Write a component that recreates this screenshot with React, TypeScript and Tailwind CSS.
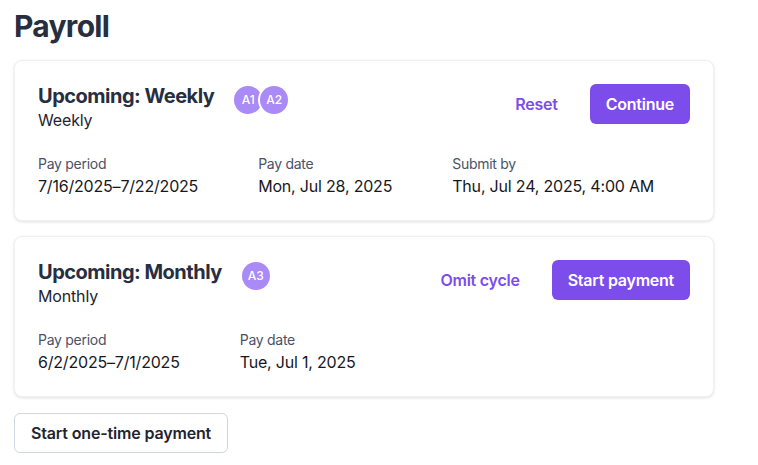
type Field = { label: string; value: string };

type Cycle = {
  title: string;
  subtitle: string;
  avatars: string[];
  secondary: string;
  primary: string;
  fields: Field[];
};

const cycles: Cycle[] = [
  {
    title: 'Upcoming: Weekly',
    subtitle: 'Weekly',
    avatars: ['A1', 'A2'],
    secondary: 'Reset',
    primary: 'Continue',
    fields: [
      { label: 'Pay period', value: '7/16/2025–7/22/2025' },
      { label: 'Pay date', value: 'Mon, Jul 28, 2025' },
      { label: 'Submit by', value: 'Thu, Jul 24, 2025, 4:00 AM' },
    ],
  },
  {
    title: 'Upcoming: Monthly',
    subtitle: 'Monthly',
    avatars: ['A3'],
    secondary: 'Omit cycle',
    primary: 'Start payment',
    fields: [
      { label: 'Pay period', value: '6/2/2025–7/1/2025' },
      { label: 'Pay date', value: 'Tue, Jul 1, 2025' },
    ],
  },
];

function AvatarStack({ ids }: { ids: string[] }) {
  return (
    <div className="flex mt-0.5 ml-5 -space-x-[2px]">
      {ids.map((id) => (
        <div
          key={id}
          className="w-7 h-7 rounded-full bg-[#a98af6] ring-2 ring-white flex items-center justify-center text-[12px] font-medium text-white"
        >
          {id}
        </div>
      ))}
    </div>
  );
}

function CycleCard({ cycle }: { cycle: Cycle }) {
  return (
    <div className="w-[700px] bg-white rounded-lg border border-[#f0f1f4] shadow-[0_1px_3px_rgba(0,0,0,0.12)] px-[23px] pt-[23px] pb-[22px]">
      <div className="flex items-start justify-between">
        <div className="flex items-start">
          <div>
            <h2 className="text-[20px] leading-6 font-bold tracking-[-0.025em] text-[#272e3f]">
              {cycle.title}
            </h2>
            <p className="text-base leading-6 tracking-[-0.01em] text-[#1f2430]">
              {cycle.subtitle}
            </p>
          </div>
          <AvatarStack ids={cycle.avatars} />
        </div>
        <div className="flex items-center gap-4">
          <button className="px-4 py-2 text-base leading-6 font-semibold tracking-[-0.015em] text-[#7c4dea] rounded-md">
            {cycle.secondary}
          </button>
          <button className="px-4 py-2 text-base leading-6 font-semibold tracking-[-0.015em] text-white bg-[#7c4dea] rounded-md">
            {cycle.primary}
          </button>
        </div>
      </div>

      <div className="flex gap-[60px] mt-[22px]">
        {cycle.fields.map((f) => (
          <div key={f.label}>
            <p className="text-sm leading-5 tracking-[-0.02em] text-[#4a5266]">{f.label}</p>
            <p className="text-base leading-6 tracking-[-0.012em] text-[#16181d]">{f.value}</p>
          </div>
        ))}
      </div>
    </div>
  );
}

export default function App() {
  return (
    <div
      className="min-h-screen bg-white px-[14px] pt-2"
      style={{ fontFamily: 'Inter, "Noto Sans", sans-serif' }}
    >
      <h1 className="text-3xl leading-9 font-bold tracking-[-0.024em] text-[#272e3f] mb-4">
        Payroll
      </h1>
      <div className="flex flex-col gap-[15px]">
        {cycles.map((c) => (
          <CycleCard key={c.title} cycle={c} />
        ))}
      </div>
      <button className="mt-4 px-4 py-[7px] text-base leading-6 font-semibold tracking-[-0.01em] text-[#1f2430] bg-white border border-[#cfd6e2] rounded-md">
        Start one-time payment
      </button>
    </div>
  );
}
